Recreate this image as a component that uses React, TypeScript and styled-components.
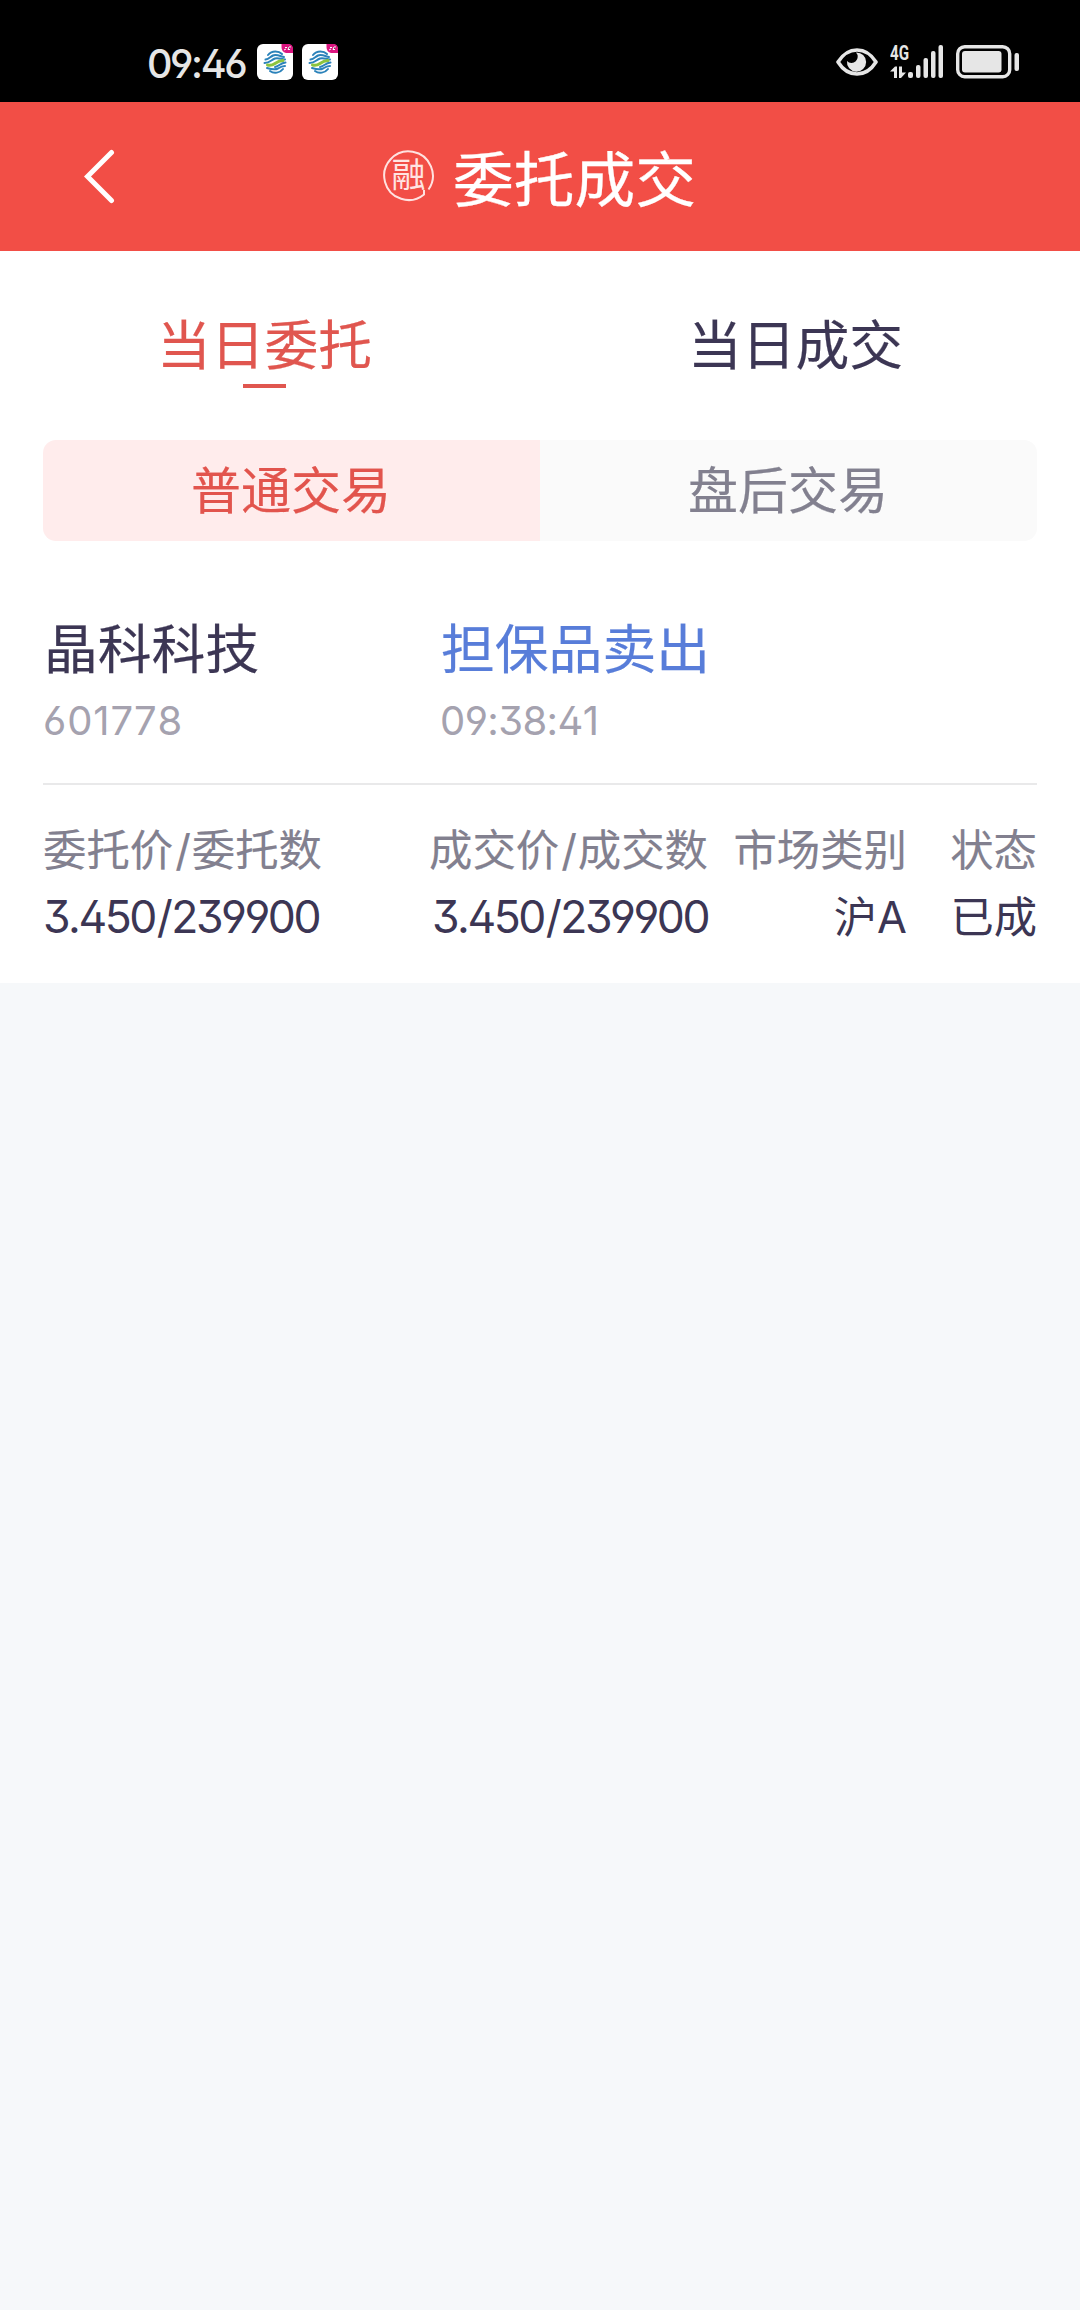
import React from "react";
import styled, { createGlobalStyle } from "styled-components";

const GlobalStyle = createGlobalStyle`
  * { box-sizing: border-box; }
  body {
    margin: 0;
    background: #f6f8fa;
    font-family: Inter, "Noto Sans CJK SC", sans-serif;
    font-feature-settings: "cv02", "cv03", "cv04", "ss01", "calt" 0;
    font-kerning: none;
  }
`;

const Screen = styled.div`
  display: flex;
  flex-direction: column;
  width: 1080px;
  min-height: 2310px;
  background: #f6f8fa;
`;

const StatusBar = styled.div`
  display: flex;
  justify-content: space-between;
  align-items: center;
  height: 102px;
  padding: 22px 61px 0 147px;
  background: #000;
  color: #e6e6e6;
`;

const StatusGroup = styled.div<{ $gap: number }>`
  display: flex;
  align-items: center;
  gap: ${(p) => p.$gap}px;
`;

const Clock = styled.span`
  width: 101px;
  padding-top: 4px;
  font-size: 39.5px;
  line-height: 46px;
  letter-spacing: -2.4px;
  font-weight: 500;
  white-space: nowrap;
`;

const Header = styled.header`
  display: grid;
  grid-template-columns: 86px 1fr 86px;
  align-items: center;
  height: 149px;
  padding: 0 0 2px;
  background: #f24e46;
  color: #fff;
`;

const BackButton = styled.button`
  display: flex;
  justify-content: flex-end;
  width: 118px;
  padding: 0;
  border: 0;
  background: none;
`;

const TitleGroup = styled.div`
  display: flex;
  justify-content: center;
  align-items: center;
  gap: 18px;
  padding-right: 1px;
`;

const Title = styled.h1`
  margin: 0;
  padding-top: 8px;
  font-size: 60.7px;
  line-height: 72px;
  font-weight: 400;
  -webkit-text-stroke: 0.3px currentColor;
`;

const Panel = styled.main`
  height: 732px;
  padding: 50px 43px 0;
  background: #fff;
`;

const Tabs = styled.nav`
  display: grid;
  grid-template-columns: 529px 533px;
  margin: 0 -25px 0 -43px;
  height: 139px;
`;

const Tab = styled.div<{ $active?: boolean }>`
  display: flex;
  flex-direction: column;
  align-items: center;
  gap: 3px;
  padding-top: 10px;
  font-size: 53.8px;
  line-height: 70px;
  color: ${(p) => (p.$active ? "#e0564f" : "#3c3654")};
  -webkit-text-stroke: 0.2px currentColor;
`;

const TabMark = styled.span`
  width: 43px;
  height: 4px;
  background: #e0564f;
`;

const Segments = styled.div`
  display: grid;
  grid-template-columns: 1fr 1fr;
  height: 101px;
  border-radius: 13px;
  overflow: hidden;
`;

const Segment = styled.div<{ $active?: boolean }>`
  padding: 1px 1px 0 0;
  display: flex;
  align-items: center;
  justify-content: center;
  font-size: 50px;
  line-height: 60px;
  background: ${(p) => (p.$active ? "#ffecec" : "#fafafa")};
  color: ${(p) => (p.$active ? "#e2544d" : "#82808f")};
  -webkit-text-stroke: 0.2px currentColor;
`;

const Summary = styled.section`
  display: grid;
  grid-template-columns: 397px 1fr;
  height: 244px;
  padding: 73px 0 0 1px;
  border-bottom: 2px solid #e9e9ea;
`;

const Name = styled.div<{ $color: string }>`
  font-size: 53.8px;
  line-height: 72px;
  color: ${(p) => p.$color};
  -webkit-text-stroke: 0.2px currentColor;
`;

const Meta = styled.div<{ $spacing: number }>`
  margin-left: -1px;
  font-size: 40px;
  line-height: 48px;
  margin-top: 11px;
  letter-spacing: ${(p) => p.$spacing}px;
  color: #a5a2af;
`;

const Details = styled.section`
  display: grid;
  grid-template-columns: 281px 384px 199px 130px;
  padding-top: 35px;
`;

const Cell = styled.div<{ $left?: boolean }>`
  display: flex;
  flex-direction: column;
  align-items: ${(p) => (p.$left ? "flex-start" : "flex-end")};
  white-space: nowrap;
`;

const Label = styled.span`
  font-size: 43.4px;
  line-height: 60px;
  color: #82808f;
  -webkit-text-stroke: 0.15px currentColor;
`;

const Slash = styled.span`
  margin: 0 1px 0 2px;
`;

const Value = styled.span<{ $numeric?: boolean }>`
  margin-top: 7px;
  font-size: ${(p) => (p.$numeric ? 44.5 : 43.3)}px;
  letter-spacing: ${(p) => (p.$numeric ? -2.5 : 0)}px;
  line-height: 60px;
  color: #3c3654;
`;

const CarrierLogo = () => (
  <svg width="36" height="36" viewBox="0 0 36 36">
    <rect width="36" height="36" rx="6" fill="#fff" />
    <g fill="none" strokeWidth="2" strokeLinecap="round">
      <path d="M11 11 C15 6 22 7 25 10" stroke="#2b82ba" />
      <path d="M8.500 15.500 C12 15 13 13 16 11.500 C19 10 23 12 27 13" stroke="#2b82ba" />
      <path d="M7.500 19 C13 19 14 16 18 14.500 C21 13.500 24 15 28 15.500" stroke="#2b82ba" />
      <path d="M10.500 21 C18 23 17 17 26 16.500" stroke="#8cc43e" strokeWidth="3" />
      <path d="M18 23 C23 22 23 19 28.500 18.500" stroke="#2b82ba" />
      <path d="M10 24 C15 25.500 18 26 21 24.500 C24 22.500 25 22 28 22" stroke="#2b82ba" />
      <path d="M13 27 C17 30 23 29 26 25" stroke="#2b82ba" />
    </g>
    <path d="M24.500 0 H31 Q36 0 36 5 V9 H29 Q24.500 8 24.500 3Z" fill="#dc1680" />
    <path d="M27 6 L29 5 M28 3.500 L30 3.500 M31 5.500 L32 3 L34 3 M31 5.500 L33 5.500" stroke="#fff" strokeWidth="1" />
  </svg>
);

const EyeIcon = () => (
  <svg width="42" height="28" viewBox="0 0 42 28">
    <path d="M2 14 C12 -2 30 -2 40 14 C30 30 12 30 2 14Z" fill="none" stroke="#e6e6e6" strokeWidth="3.600" strokeLinejoin="round" />
    <path d="M20 4.500 A9.600 9.600 0 1 1 11 13 A5.200 5.200 0 1 0 20 4.500Z" fill="#e6e6e6" />
  </svg>
);

const SignalIcon = () => (
  <svg width="54" height="50" viewBox="0 -8 54 50" fill="#e6e6e6">
    <text x="0" y="14.500" fontSize="20.500" fontWeight="700" fontFamily="Roboto, sans-serif" textLength="19" lengthAdjust="spacingAndGlyphs">4G</text>
    <path d="M0 26.500 L5 21.500 H7 V33 H4 V26.500Z M9 21.500 H12 V27.500 H16 L11 33 H9Z" />
    <rect x="18" y="27" width="5" height="6" rx="2" />
    <rect x="26" y="20" width="4.500" height="13" rx="2" />
    <rect x="33.500" y="13" width="4.500" height="20" rx="2" />
    <rect x="41" y="6" width="4.500" height="27" rx="2" />
    <rect x="48.500" y="0" width="4.500" height="33" rx="2" />
  </svg>
);

const BatteryIcon = () => (
  <svg width="63" height="34" viewBox="0 0 63 34">
    <rect x="1.700" y="1.700" width="52" height="30" rx="7" fill="none" stroke="#e6e6e6" strokeWidth="3.400" />
    <rect x="6" y="6" width="39.500" height="21.500" rx="3" fill="#e6e6e6" />
    <rect x="58.500" y="8" width="4.500" height="18" rx="2" fill="#e6e6e6" />
  </svg>
);

const ChevronIcon = () => (
  <svg width="34" height="56" viewBox="0 0 34 56">
    <path d="M27.500 4.500 L3.500 28.500 L27.500 52.500" fill="none" stroke="#fff" strokeWidth="5" strokeLinecap="round" />
  </svg>
);

const MarginBadge = () => (
  <svg width="52" height="68" viewBox="0 -8 52 68">
    <path d="M45.500 39.500 A24.300 24.300 0 1 0 41 44.400 L41 40" fill="none" stroke="#ffe2e0" strokeWidth="2" />
    <text x="25.500" y="36.500" textAnchor="middle" fontSize="34" fontWeight="400" fill="#ffe4e2" fontFamily="'Noto Sans CJK SC', sans-serif">融</text>
  </svg>
);

const cells = [
  { label: ["委托价", "委托数"], value: ["3.450", "239900"], numeric: true, left: true },
  { label: ["成交价", "成交数"], value: ["3.450", "239900"], numeric: true },
  { label: ["市场类别"], value: ["沪A"] },
  { label: ["状态"], value: ["已成"] },
];

const Pair = ({ parts }: { parts: string[] }) => (
  <>
    {parts[0]}
    {parts[1] && <Slash>/</Slash>}
    {parts[1]}
  </>
);

export default function App() {
  return (
    <>
      <GlobalStyle />
      <Screen>
        <StatusBar>
          <StatusGroup $gap={9}>
            <Clock>09:46</Clock>
            <CarrierLogo />
            <CarrierLogo />
          </StatusGroup>
          <StatusGroup $gap={12}>
            <EyeIcon />
            <SignalIcon />
            <BatteryIcon />
          </StatusGroup>
        </StatusBar>
        <Header>
          <BackButton aria-label="返回">
            <ChevronIcon />
          </BackButton>
          <TitleGroup>
            <MarginBadge />
            <Title>委托成交</Title>
          </TitleGroup>
        </Header>
        <Panel>
          <Tabs>
            <Tab $active>
              当日委托
              <TabMark />
            </Tab>
            <Tab>当日成交</Tab>
          </Tabs>
          <Segments>
            <Segment $active>普通交易</Segment>
            <Segment>盘后交易</Segment>
          </Segments>
          <Summary>
            <div>
              <Name $color="#3c3654">晶科科技</Name>
              <Meta $spacing={0.9}>601778</Meta>
            </div>
            <div>
              <Name $color="#587dd9">担保品卖出</Name>
              <Meta $spacing={-0.6}>09:38:41</Meta>
            </div>
          </Summary>
          <Details>
            {cells.map((c) => (
              <Cell key={c.label[0]} $left={c.left}>
                <Label>
                  <Pair parts={c.label} />
                </Label>
                <Value $numeric={c.numeric}>
                  <Pair parts={c.value} />
                </Value>
              </Cell>
            ))}
          </Details>
        </Panel>
      </Screen>
    </>
  );
}
